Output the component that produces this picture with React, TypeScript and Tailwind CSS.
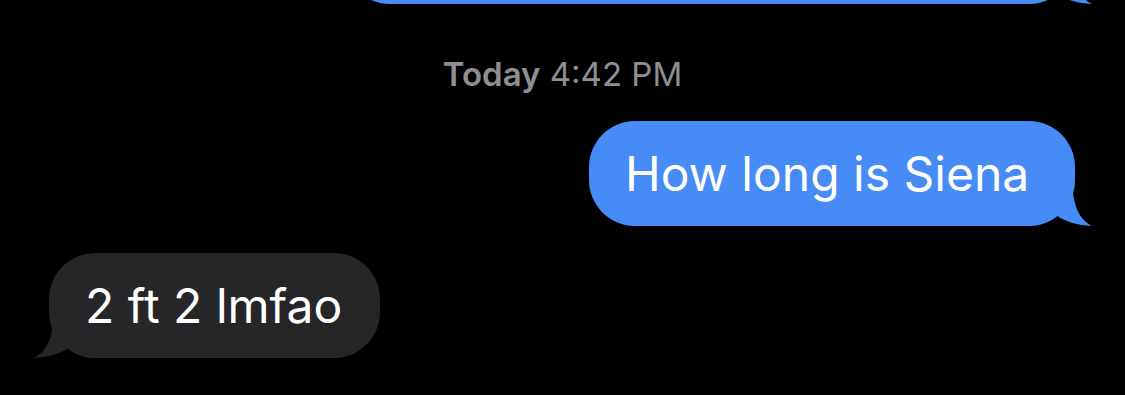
function Tail({ color, side }: { color: string; side: "left" | "right" }) {
  const isRight = side === "right";
  return (
    <svg
      className={
        isRight
          ? "absolute right-[-18px] bottom-0"
          : "absolute left-[-16px] bottom-0 -scale-x-100"
      }
      width="55"
      height="52"
      viewBox="0 0 55 52"
    >
      <path d="M16 0 L34 0 C34 25 38 44 54 52 Q31 51 16 40 Z" fill={color} />
    </svg>
  );
}

export default function App() {
  return (
    <div
      className="w-full h-[395px] bg-black overflow-hidden flex flex-col"
      style={{ fontFamily: "Inter, 'Liberation Sans', sans-serif" }}
    >
      {/* previous message, mostly scrolled out */}
      <div className="relative self-end mr-[50px] mt-[-101px] w-[731px] h-[105px] rounded-[46px] bg-[#478bf6]">
        <Tail color="#478bf6" side="right" />
      </div>

      <div className="mt-[50px] text-center text-[33px] leading-[40px] text-[#8e8e93]">
        <span className="font-semibold">Today</span> 4:42 PM
      </div>

      <div className="relative self-end mr-[50px] mt-[27px] w-[486px] h-[105px] rounded-[46px] bg-[#478bf6] flex items-center pl-[36px]">
        <span className="text-white text-[48px] leading-none">How long is Siena</span>
        <Tail color="#478bf6" side="right" />
      </div>

      <div className="relative self-start ml-[49px] mt-[27px] w-[331px] h-[105px] rounded-[46px] bg-[#262628] flex items-center pl-[36px]">
        <span className="text-white text-[48px] leading-none">2 ft 2 lmfao</span>
        <Tail color="#262628" side="left" />
      </div>
    </div>
  );
}
